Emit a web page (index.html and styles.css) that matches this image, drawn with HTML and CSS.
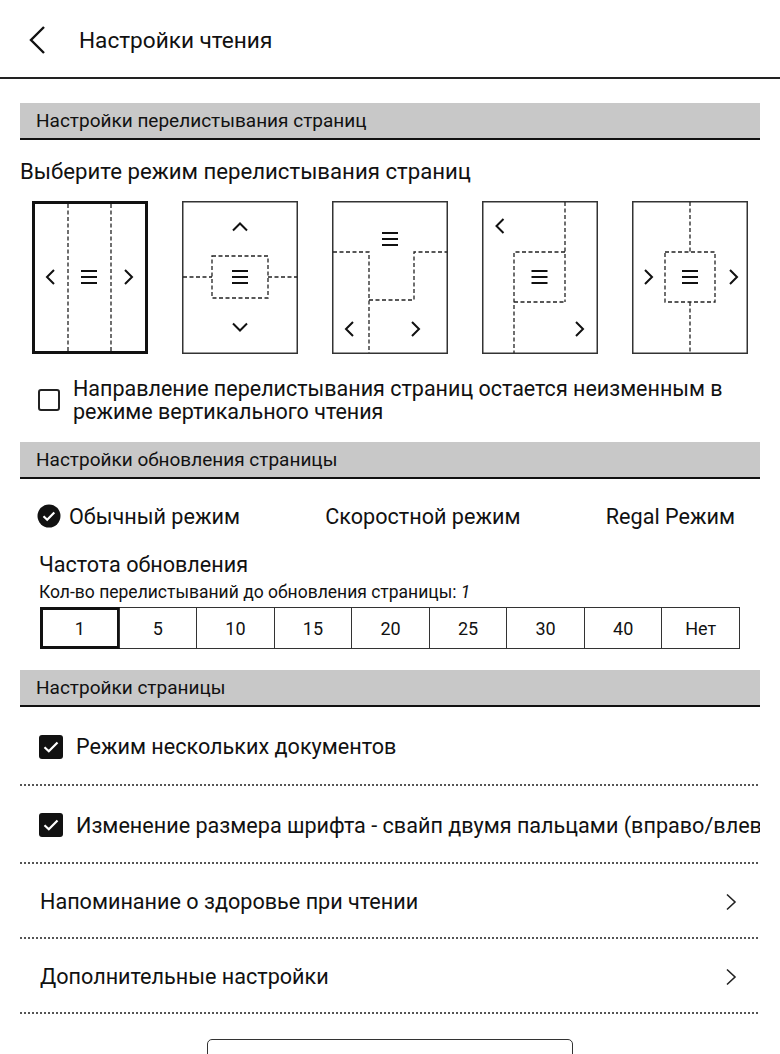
FILE: index.html
```html
<!DOCTYPE html>
<html lang="ru">
<head>
    <meta charset="UTF-8">
    <meta name="viewport" content="width=device-width, initial-scale=1.0">
    <title>Настройки чтения</title>
    <link rel="stylesheet" href="styles.css">
</head>
<body>
<div class="page">

    <!-- Top bar -->
    <header class="topbar">
        <svg class="back" viewBox="0 0 20 30" width="20" height="30">
            <path d="M16 2L3 15L16 28"/>
        </svg>
        <h1 class="title">Настройки чтения</h1>
    </header>

    <main class="content">

        <!-- Page turning -->
        <div class="section-head">Настройки перелистывания страниц</div>
        <p class="prompt">Выберите режим перелистывания страниц</p>

        <div class="modes">
            <div class="mode">
                <svg viewBox="0 0 116 153" width="116" height="153">
                    <rect class="frame-active" x="1.5" y="1.5" width="113" height="150"/>
                    <path class="dash" d="M36 3V150M79 3V150"/>
                    <path class="chev" d="M22 69L15 76L22 83"/>
                    <path class="menu" d="M49 70H65M49 76H65M49 82H65"/>
                    <path class="chev" d="M93 69L100 76L93 83"/>
                </svg>
            </div>
            <div class="mode">
                <svg viewBox="0 0 116 153" width="116" height="153">
                    <rect class="frame" x="0.75" y="0.75" width="114.5" height="151.5"/>
                    <path class="dash" d="M1 76H30M86 76H115M30 55H86V97H30Z"/>
                    <path class="chev" d="M51 29.5L58 22.5L65 29.5"/>
                    <path class="menu" d="M50 70H66M50 76H66M50 82H66"/>
                    <path class="chev" d="M51 122.5L58 129.5L65 122.5"/>
                </svg>
            </div>
            <div class="mode">
                <svg viewBox="0 0 116 153" width="116" height="153">
                    <rect class="frame" x="0.75" y="0.75" width="114.5" height="151.5"/>
                    <path class="dash" d="M1 51H37V152M37 99H82V51H115"/>
                    <path class="menu" d="M50 32H66M50 38H66M50 44H66"/>
                    <path class="chev" d="M21 121L14 128L21 135"/>
                    <path class="chev" d="M80 121L87 128L80 135"/>
                </svg>
            </div>
            <div class="mode">
                <svg viewBox="0 0 116 153" width="116" height="153">
                    <rect class="frame" x="0.75" y="0.75" width="114.5" height="151.5"/>
                    <path class="dash" d="M83 1V101M83 51H32V152M32 101H83"/>
                    <path class="chev" d="M21.5 18L14.5 25L21.5 32"/>
                    <path class="menu" d="M49.5 70H65.5M49.5 76H65.5M49.5 82H65.5"/>
                    <path class="chev" d="M94 121L101 128L94 135"/>
                </svg>
            </div>
            <div class="mode">
                <svg viewBox="0 0 116 153" width="116" height="153">
                    <rect class="frame" x="0.75" y="0.75" width="114.5" height="151.5"/>
                    <path class="dash" d="M58 1V51M33 51H83V101H33ZM58 101V152"/>
                    <path class="chev" d="M13 69L20 76L13 83"/>
                    <path class="menu" d="M50 70H66M50 76H66M50 82H66"/>
                    <path class="chev" d="M98 69L105 76L98 83"/>
                </svg>
            </div>
        </div>

        <label class="check-row">
            <span class="box"></span>
            <span class="check-text">Направление перелистывания страниц остается неизменным в режиме вертикального чтения</span>
        </label>

        <!-- Refresh -->
        <div class="section-head head-refresh">Настройки обновления страницы</div>

        <div class="refresh-modes">
            <div class="refresh-option">
                <svg class="radio-on" viewBox="0 0 24 24" width="24" height="24">
                    <circle cx="12" cy="12" r="11.5"/>
                    <path d="M6.5 12.3L10.2 15.8L17.3 8.6"/>
                </svg>
                Обычный режим
            </div>
            <div class="refresh-option">Скоростной режим</div>
            <div class="refresh-option">Regal Режим</div>
        </div>

        <div class="freq">
            <div class="freq-title">Частота обновления</div>
            <div class="freq-hint">Кол-во перелистываний до обновления страницы: <i>1</i></div>
            <div class="freq-grid">
                <div class="freq-cell active">1</div>
                <div class="freq-cell">5</div>
                <div class="freq-cell">10</div>
                <div class="freq-cell">15</div>
                <div class="freq-cell">20</div>
                <div class="freq-cell">25</div>
                <div class="freq-cell">30</div>
                <div class="freq-cell">40</div>
                <div class="freq-cell">Нет</div>
            </div>
        </div>

        <!-- Page -->
        <div class="section-head head-page">Настройки страницы</div>

        <div class="list-row row-first">
            <svg class="check-on" viewBox="0 0 24 24" width="24" height="24">
                <rect x="0" y="0" width="24" height="24" rx="3"/>
                <path d="M5.5 12.3L9.8 16.3L18.5 7.5"/>
            </svg>
            <span class="list-text">Режим нескольких документов</span>
        </div>
        <div class="list-row row-tall">
            <svg class="check-on" viewBox="0 0 24 24" width="24" height="24">
                <rect x="0" y="0" width="24" height="24" rx="3"/>
                <path d="M5.5 12.3L9.8 16.3L18.5 7.5"/>
            </svg>
            <span class="list-text">Изменение размера шрифта - свайп двумя пальцами (вправо/влево)</span>
        </div>
        <div class="list-row link-row">
            <span class="list-text">Напоминание о здоровье при чтении</span>
            <svg class="arrow" viewBox="0 0 12 18" width="12" height="18"><path d="M2 1.5L10 9L2 16.5"/></svg>
        </div>
        <div class="list-row link-row">
            <span class="list-text">Дополнительные настройки</span>
            <svg class="arrow" viewBox="0 0 12 18" width="12" height="18"><path d="M2 1.5L10 9L2 16.5"/></svg>
        </div>

        <div class="bottom-btn">Сбросить настройки</div>
    </main>
</div>
</body>
</html>
```

FILE: styles.css
```css
* {
    box-sizing: border-box;
}
body {
    margin: 0;
    font-family: Roboto, "Noto Sans", sans-serif;
    color: #111;
    background-color: #fff;
}
.page {
    height: 100vh;
    overflow: hidden;
}

/* Top bar */
.topbar {
    height: 79px;
    border-bottom: 2px solid #222;
    display: flex;
    align-items: center;
    padding-left: 28px;
    padding-top: 3px;
}
.back path {
    fill: none;
    stroke: #111;
    stroke-width: 2.4;
}
.title {
    margin: 0 0 0 31px;
    font-size: 22.6px;
    font-weight: 400;
}
.content {
    padding: 0 20px;
}

/* Grey section headers */
.section-head {
    height: 37px;
    margin-top: 24px;
    padding-left: 16px;
    background-color: #c8c8c8;
    border-bottom: 2px solid #111;
    font-size: 19px;
    line-height: 35px;
}
.head-refresh {
    margin-top: 19px;
}
.head-page {
    margin-top: 21px;
}
.prompt {
    margin: 19px 0 0;
    font-size: 22.2px;
    line-height: 24px;
}

/* Page turn modes */
.modes {
    display: flex;
    gap: 34px;
    margin-top: 18px;
    padding-left: 12px;
}
.mode svg {
    display: block;
}
.mode .frame {
    fill: none;
    stroke: #333;
    stroke-width: 1.5;
}
.mode .frame-active {
    fill: none;
    stroke: #111;
    stroke-width: 3;
}
.mode .dash {
    fill: none;
    stroke: #222;
    stroke-width: 1.3;
    stroke-dasharray: 4 2.5;
}
.mode .chev {
    fill: none;
    stroke: #111;
    stroke-width: 2;
}
.mode .menu {
    fill: none;
    stroke: #111;
    stroke-width: 2.2;
}

.check-row {
    display: flex;
    align-items: center;
    margin-top: 23px;
    padding-left: 18px;
}
.box {
    width: 22px;
    height: 22px;
    flex: none;
    border: 2px solid #222;
    border-radius: 3px;
}
.check-text {
    margin-left: 13px;
    font-size: 21.5px;
    line-height: 23px;
}

/* Refresh modes */
.refresh-modes {
    display: flex;
    justify-content: space-between;
    align-items: center;
    height: 40px;
    margin-top: 17px;
    padding: 0 25px 0 17px;
    font-size: 21.6px;
}
.refresh-option {
    display: flex;
    align-items: center;
    gap: 8px;
}
.radio-on circle {
    fill: #111;
}
.radio-on path,
.check-on path {
    fill: none;
    stroke: #fff;
    stroke-width: 2.2;
}
.freq {
    padding: 0 20px 0 19px;
}
.freq-title {
    margin-top: 17px;
    font-size: 21.6px;
    line-height: 24px;
}
.freq-hint {
    margin-top: 5px;
    font-size: 17.5px;
    line-height: 20px;
}
.freq-grid {
    display: grid;
    grid-template-columns: repeat(9, 1fr);
    height: 42px;
    margin-top: 5px;
    margin-left: 1px;
    border: 1px solid #333;
}
.freq-cell {
    display: flex;
    align-items: center;
    justify-content: center;
    border-left: 1px solid #333;
    font-size: 18px;
}
.freq-cell:first-child {
    border-left: none;
}
.freq-cell.active {
    outline: 3px solid #111;
    outline-offset: -2px;
}

/* Page settings list */
.list-row {
    display: flex;
    align-items: center;
    gap: 13px;
    height: 75px;
    padding-left: 19px;
    font-size: 21.6px;
    background: repeating-linear-gradient(to right, #555 0 2px, transparent 2px 4px) left bottom / 100% 2px no-repeat;
}
.row-first {
    height: 79px;
}
.row-tall {
    height: 78px;
}
.list-text {
    flex: 1 1 auto;
    min-width: 0;
    overflow: hidden;
    white-space: nowrap;
}
.link-row {
    padding-left: 20px;
    padding-right: 23px;
}
.check-on {
    flex: none;
}
.check-on rect {
    fill: #111;
}
.arrow {
    flex: none;
}
.arrow path {
    fill: none;
    stroke: #222;
    stroke-width: 1.6;
}
.bottom-btn {
    width: 366px;
    height: 50px;
    margin: 25px auto 0;
    border: 1.5px solid #333;
    border-radius: 5px;
    text-align: center;
    font-size: 21.6px;
    line-height: 47px;
}
```
